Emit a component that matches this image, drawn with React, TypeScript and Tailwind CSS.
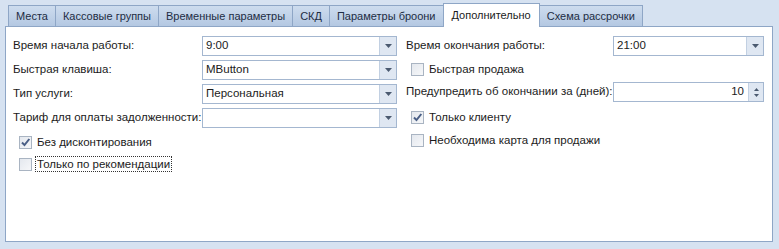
import React from 'react';

const TABS = ['Места', 'Кассовые группы', 'Временные параметры', 'СКД', 'Параметры броони', 'Дополнительно', 'Схема рассрочки'];
const ACTIVE = 'Дополнительно';

function Arrow() {
  return (
    <svg width="7" height="4" viewBox="0 0 7 4">
      <path d="M0 0h7L3.5 4z" fill="#4b5a70" />
    </svg>
  );
}

function Combo({ value, width }: { value: string; width: string }) {
  return (
    <div className={`flex h-5 ${width} border border-[#a4b7d0] bg-white`}>
      <div className="flex flex-1 items-center pl-[3px] leading-none">{value}</div>
      <div className="flex w-[17px] items-center justify-center border-l border-[#c2d0e2] bg-[#dfe7f2]">
        <Arrow />
      </div>
    </div>
  );
}

function Spin({ value, width }: { value: string; width: string }) {
  return (
    <div className={`flex h-5 ${width} border border-[#a4b7d0] bg-white`}>
      <div className="flex flex-1 items-center justify-end pr-[4px] leading-none">{value}</div>
      <div className="flex w-[15px] flex-col items-center justify-center gap-[3px] border-l border-[#c2d0e2] bg-[#dfe7f2]">
        <svg width="5" height="3" viewBox="0 0 5 3">
          <path d="M0 3h5L2.5 0z" fill="#4b5a70" />
        </svg>
        <svg width="5" height="3" viewBox="0 0 5 3">
          <path d="M0 0h5L2.5 3z" fill="#4b5a70" />
        </svg>
      </div>
    </div>
  );
}

function Check({ label, checked, focused }: { label: string; checked?: boolean; focused?: boolean }) {
  return (
    <div className="flex items-center gap-[3px]">
      <div className="relative h-[13px] w-[13px] border border-[#a9b4c2] bg-gradient-to-br from-[#e4e8ee] to-[#f6f7f9]">
        {checked && (
          <svg className="absolute left-[0px] top-[0px]" width="11" height="11" viewBox="0 0 11 11">
            <path d="M2 5.5l2.5 2.6L9.3 2" stroke="#4a5f86" strokeWidth="2" fill="none" />
          </svg>
        )}
      </div>
      <span className={focused ? 'border border-dotted border-[#333] px-[1px] leading-[14px]' : 'px-[2px] leading-[14px]'}>
        {label}
      </span>
    </div>
  );
}

export default function App() {
  return (
    <div
      className="h-[249px] w-[779px] whitespace-nowrap bg-[#d6e2f1] text-[11.5px] text-[#1b1b1b]"
      style={{ fontFamily: '"Liberation Sans", Arial, sans-serif' }}
    >
      <div className="flex h-[26px] items-end pl-[8px] text-[11px]">
        {TABS.map((t) =>
          t === ACTIVE ? (
            <div
              key={t}
              className="relative z-10 -mb-px -mr-px flex h-[24px] items-center border border-b-0 border-[#8ea6c6] bg-white px-[8px]"
            >
              {t}
            </div>
          ) : (
            <div
              key={t}
              className="-mr-px flex h-[21px] items-center border border-b-0 border-[#8ea6c6] bg-gradient-to-b from-[#cddcee] to-[#b4c8e2] px-[7px] text-[#1e2d44]"
            >
              {t}
            </div>
          ),
        )}
      </div>
      <div className="ml-[5px] flex h-[216px] w-[768px] border border-[#8ea6c6] bg-white pt-[9px]">
        <div className="flex w-[393px] flex-col pl-[7px]">
          <div className="flex flex-col gap-[4px]">
            {[
              ['Время начала работы:', '9:00'],
              ['Быстрая клавиша:', 'MButton'],
              ['Тип услуги:', 'Персональная'],
              ['Тариф для оплаты задолженности:', ''],
            ].map(([l, v]) => (
              <div key={l} className="flex h-5 items-center">
                <div className="w-[189px]">{l}</div>
                <Combo value={v} width="w-[195px]" />
              </div>
            ))}
          </div>
          <div className="mt-[3px] flex h-[22px] items-center pl-[6px]">
            <Check label="Без дисконтирования" checked />
          </div>
          <div className="flex h-[22px] items-center pl-[6px]">
            <Check label="Только по рекомендации" focused />
          </div>
        </div>
        <div className="flex flex-1 flex-col pl-[7px]">
          <div className="flex h-5 items-center">
            <div className="w-[207px]">Время окончания работы:</div>
            <Combo value="21:00" width="w-[151px]" />
          </div>
          <div className="flex h-[26px] items-center pl-[5px]">
            <Check label="Быстрая продажа" />
          </div>
          <div className="flex h-5 items-center">
            <div className="w-[207px]">Предупредить об окончании за (дней):</div>
            <Spin value="10" width="w-[151px]" />
          </div>
          <div className="mt-[4px] flex h-[22px] items-center pl-[5px]">
            <Check label="Только клиенту" checked />
          </div>
          <div className="flex h-[24px] items-center pl-[5px]">
            <Check label="Необходима карта для продажи" />
          </div>
        </div>
      </div>
    </div>
  );
}
